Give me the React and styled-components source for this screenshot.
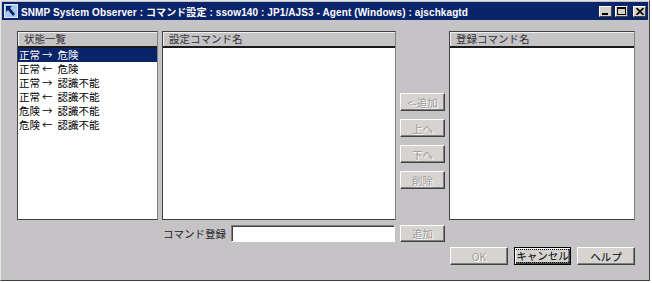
import React from "react"
import styled, { createGlobalStyle } from "styled-components"

const GlobalStyle = createGlobalStyle`
  body {
    margin: 0;
    background: #ffffff;
    font-family: "Noto Sans CJK JP", "Liberation Sans", sans-serif;
  }
`

const Window = styled.div`
  width: 650px;
  height: 281px;
  box-sizing: border-box;
  background: #c6c3c6;
  border: 1px solid;
  border-color: #e4e4e4 #404040 #404040 #e4e4e4;
  padding: 1px;
  display: flex;
  flex-direction: column;
`

const TitleBar = styled.div`
  height: 18px;
  background: #0a246a;
  display: flex;
  align-items: center;
  padding: 0 2px;
  gap: 3px;
`

const TitleText = styled.div`
  flex: 1;
  color: #fff;
  font-family: "Liberation Sans", "Noto Sans CJK JP", sans-serif;
  font-weight: bold;
  font-size: 10px;
  white-space: nowrap;
  letter-spacing: 0.1px;
`

const Caption = styled.div`
  width: 13px;
  height: 11px;
  box-sizing: border-box;
  background: #d4d0c8;
  border: 1px solid;
  border-color: #fff #404040 #404040 #fff;
  display: flex;
  align-items: center;
  justify-content: center;
  margin-left: ${p => p.$gap || 0}px;
`

const Body = styled.div`
  flex: 1;
  padding: 11px 0 0 15px;
  display: grid;
  grid-template-columns: 141px 234px 45px 186px;
  grid-template-rows: 189px 17px 17px;
  column-gap: 4px;
  row-gap: 5px;
`

const Panel = styled.div`
  box-sizing: border-box;
  border: 1px solid;
  border-color: #404040 #808080 #404040 #404040;
  background: #fff;
  display: flex;
  flex-direction: column;
  overflow: hidden;
`

const PanelHeader = styled.div`
  height: 16px;
  box-sizing: border-box;
  background: #c6c3c6;
  border-bottom: 2px solid #1a1a1a;
  box-shadow: inset 1px 1px #f0f0f0;
  font-size: 10.5px;
  line-height: 14px;
  padding-left: 6px;
  color: #303030;
`

const Row = styled.div`
  height: 14px;
  line-height: 14px;
  font-size: 10.5px;
  padding-left: 1px;
  white-space: nowrap;
  overflow: hidden;
  color: ${p => (p.$selected ? "#fff" : "#000")};
  background: ${p => (p.$selected ? "#0a246a" : "transparent")};
`

const Arrow = styled.span`
  margin: 0 5px 0 2px;
`

const ButtonStack = styled.div`
  display: flex;
  flex-direction: column;
  gap: 8px;
  padding-top: 62px;
`

const Button = styled.div`
  width: ${p => p.$w || 45}px;
  height: ${p => p.$h || 18}px;
  box-sizing: border-box;
  background: #d6d3d0;
  border: 1px solid;
  border-color: #ffffff #404040 #404040 #ffffff;
  box-shadow: inset -1px -1px #808080;
  display: flex;
  align-items: center;
  justify-content: center;
  font-size: 10.5px;
  white-space: nowrap;
  color: ${p => (p.$disabled ? "#9c9a98" : "#000")};
  text-shadow: ${p => (p.$disabled ? "1px 1px #ffffff" : "none")};
  ${p => p.$default && `
    border: 1px solid #000;
    box-shadow: inset 1px 1px #fff, inset -1px -1px #404040, inset -2px -2px #808080;
  `}
`

const FocusText = styled.span`
  outline: 1px dotted #000;
  padding: 0 1px;
  line-height: 12px;
`

const CommandRow = styled.div`
  display: flex;
  align-items: center;
`

const Label = styled.div`
  width: 69px;
  font-size: 10.5px;
  padding-left: 1px;
  box-sizing: border-box;
  white-space: nowrap;
  color: #202020;
`

const Input = styled.div`
  width: 164px;
  height: 17px;
  box-sizing: border-box;
  background: #fff;
  border: 1px solid;
  border-color: #808080 #ffffff #ffffff #808080;
  box-shadow: inset 1px 1px #404040;
`

const Footer = styled.div`
  display: flex;
  gap: 6px;
  padding-left: 1px;
`

function TitleIcon() {
  return (
    <svg width="14" height="14" viewBox="0 0 14 14">
      <rect x="0.5" y="0.5" width="13" height="13" fill="#a8c8f0" stroke="#dce8f8" />
      <path d="M2 2 L2 8 L4 6 L9 12 L11 10 L6 4 L8 2 Z" fill="#0a246a" />
    </svg>
  )
}

const states = [
  ["正常", "→", "危険"],
  ["正常", "←", "危険"],
  ["正常", "→", "認識不能"],
  ["正常", "←", "認識不能"],
  ["危険", "→", "認識不能"],
  ["危険", "←", "認識不能"],
]

export default function App() {
  return (
    <>
      <GlobalStyle />
      <Window>
        <TitleBar>
          <TitleIcon />
          <TitleText>SNMP System Observer : コマンド設定 : ssow140 : JP1/AJS3 - Agent (Windows) : ajschkagtd</TitleText>
          <Caption>
            <svg width="7" height="7" viewBox="0 0 7 7"><rect x="0" y="5" width="6" height="2" fill="#000" /></svg>
          </Caption>
          <Caption>
            <svg width="9" height="8" viewBox="0 0 9 8"><rect x="0.5" y="0.5" width="8" height="7" fill="none" stroke="#000" /><rect x="0" y="0" width="9" height="2" fill="#000" /></svg>
          </Caption>
          <Caption $gap={2}>
            <svg width="8" height="7" viewBox="0 0 8 7"><path d="M0.5 0 L7.5 7 M7.5 0 L0.5 7" stroke="#000" strokeWidth="1.6" /></svg>
          </Caption>
        </TitleBar>
        <Body>
          <Panel>
            <PanelHeader>状態一覧</PanelHeader>
            {states.map(([from, arrow, to], i) => (
              <Row key={i} $selected={i === 0}>
                {from}<Arrow>{arrow}</Arrow>{to}
              </Row>
            ))}
          </Panel>
          <Panel>
            <PanelHeader>設定コマンド名</PanelHeader>
          </Panel>
          <ButtonStack>
            <Button $disabled>&lt;-追加</Button>
            <Button $disabled>上へ</Button>
            <Button $disabled>下へ</Button>
            <Button $disabled>削除</Button>
          </ButtonStack>
          <Panel>
            <PanelHeader>登録コマンド名</PanelHeader>
          </Panel>

          <div />
          <CommandRow>
            <Label>コマンド登録</Label>
            <Input />
          </CommandRow>
          <Button $disabled $h={17}>追加</Button>
          <div />

          <div />
          <div />
          <div />
          <Footer>
            <Button $disabled $w={58}>OK</Button>
            <Button $default $w={57}><FocusText>キャンセル</FocusText></Button>
            <Button $w={58}>ヘルプ</Button>
          </Footer>
        </Body>
      </Window>
    </>
  )
}
